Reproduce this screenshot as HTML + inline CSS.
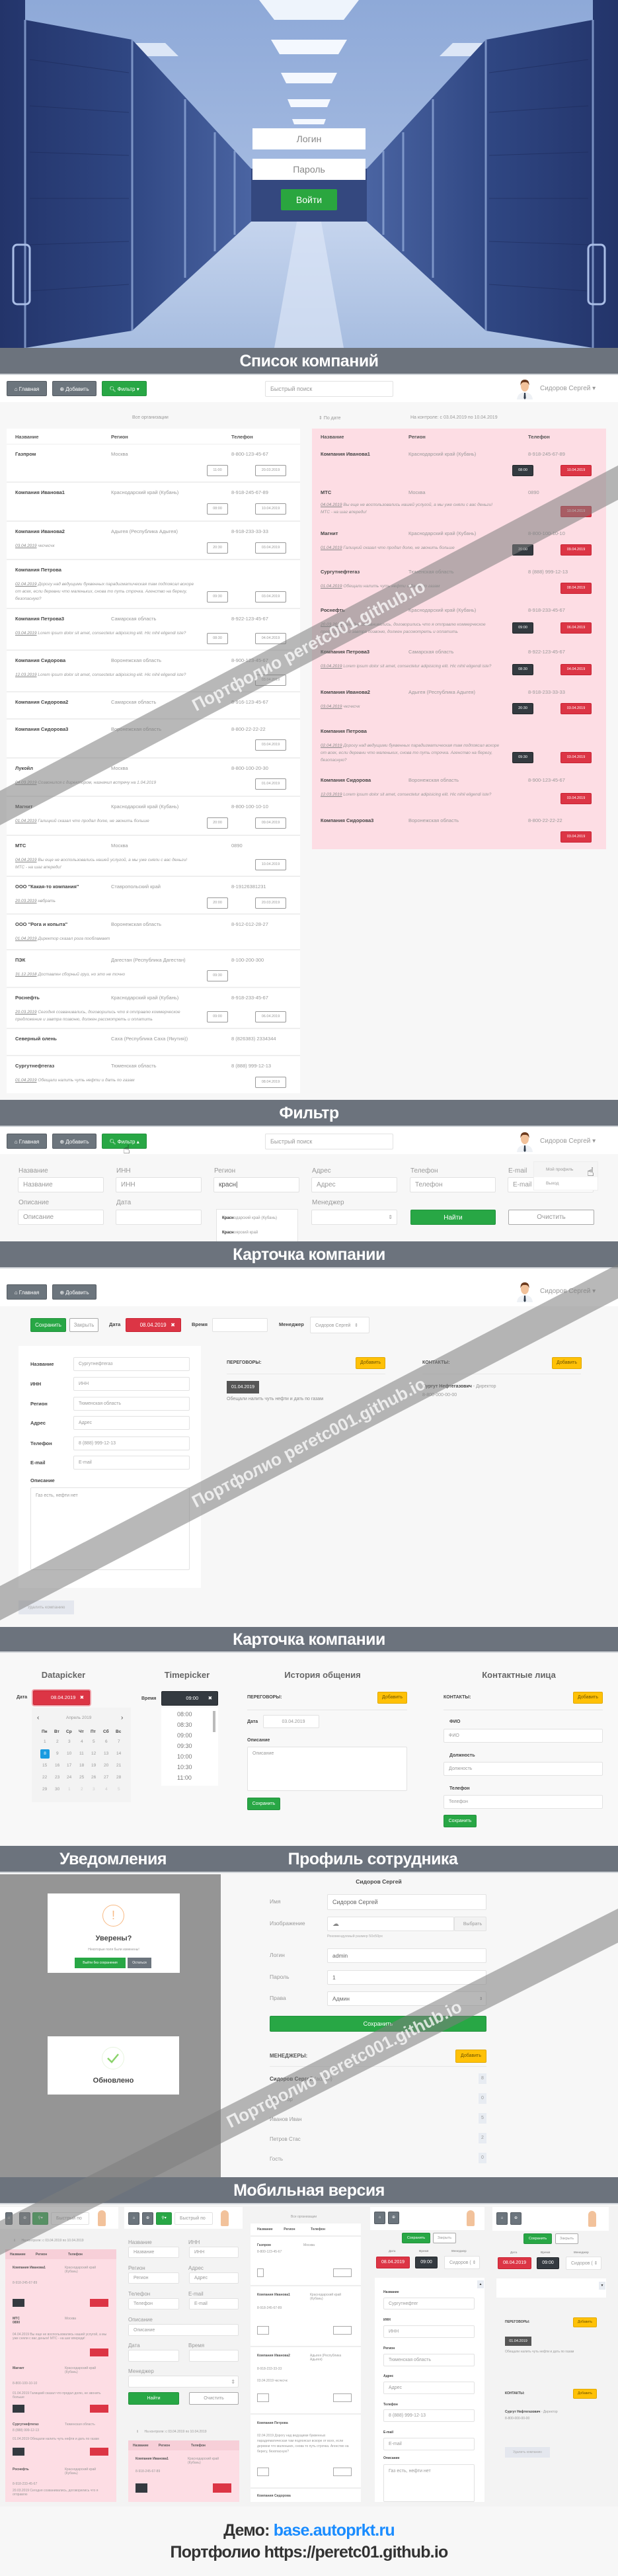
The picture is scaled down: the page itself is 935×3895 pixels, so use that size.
<!DOCTYPE html>
<html><head><meta charset="utf-8">
<style>
*{box-sizing:border-box}
body{margin:0;width:935px;height:3895px;position:relative;background:#f7f7f7;font-family:"Liberation Sans","DejaVu Sans",sans-serif;overflow:hidden;color:#555}
.a{position:absolute}
.ban{position:absolute;left:0;width:935px;background:#6c737d;color:#fff;font-weight:bold;text-align:center;font-size:25px;border-bottom:2px solid #cfd3d8;letter-spacing:-0.5px}
.nav{position:absolute;left:0;width:935px;background:#fff}
.btn{position:absolute;height:23px;border-radius:2px;font-size:8px;color:#fff;line-height:23px;text-align:center;background:#6c757d;border:1px solid #545b62}
.gr{background:#28a745;border-color:#23923d}
.rd{background:#dc3545;border-color:#c82333;color:#fff}
.dk{background:#343a40;border-color:#23272b;color:#fff}
.yl{background:#ffc107;border-color:#e0a800;color:#6b5200}
.ol{background:#fff;border:1px solid #aaa;color:#999}
.inp{position:absolute;background:#fff;border:1px solid #e2e2e2;border-radius:2px;color:#999;font-size:8px;padding-left:7px;display:flex;align-items:center}
.tb{position:absolute;background:#efefef}
.row{position:absolute;left:0;width:100%;background:#fff}
.pk .row{background:#fddde4}
.t{position:absolute;left:13px;top:10px;font-size:7.5px;font-weight:bold;color:#444;white-space:nowrap}
.g{position:absolute;left:158px;top:10px;font-size:7.5px;color:#999;white-space:nowrap}
.p{position:absolute;left:340px;top:10px;font-size:7.5px;color:#999;white-space:nowrap}
.n{position:absolute;left:13px;top:31px;width:275px;font-size:6.5px;color:#999;font-style:italic;line-height:11px}
.n u{color:#888}
.bx{position:absolute;height:17px;border:1px solid #999;border-radius:2px;font-size:5.5px;color:#999;text-align:center;line-height:15px;background:#fff}
.tm{left:303px;width:32px}
.dt{left:376px;width:47px}
.pk .tm{background:#343a40;color:#fff;border-color:#23272b}
.pk .dt{background:#dc3545;color:#fff;border-color:#c82333}
.hd{font-size:7.5px;font-weight:bold;color:#555}
.lb{position:absolute;font-size:10px;color:#999}
.lbb{position:absolute;font-size:7.5px;color:#444;font-weight:bold}
.wm{position:absolute;height:46px;background:rgba(125,125,125,0.55);color:rgba(255,255,255,0.75);font-weight:bold;font-size:26px;text-align:center;line-height:46px;white-space:nowrap;transform-origin:center}
.mp{position:absolute;background:#fff}
.sm{font-size:6px;color:#999}
</style></head><body>

<!-- HERO -->
<svg class="a" style="left:0;top:0" width="935" height="526" viewBox="0 0 935 526">
<defs>
<linearGradient id="cl" x1="0" y1="0" x2="0" y2="1"><stop offset="0" stop-color="#8ea9d8"/><stop offset="1" stop-color="#b7c9e8"/></linearGradient>
<linearGradient id="lw" x1="0" y1="0" x2="1" y2="0"><stop offset="0" stop-color="#23346a"/><stop offset="0.5" stop-color="#2f4682"/><stop offset="1" stop-color="#4a64a2"/></linearGradient>
<linearGradient id="rw" x1="1" y1="0" x2="0" y2="0"><stop offset="0" stop-color="#23346a"/><stop offset="0.5" stop-color="#2f4682"/><stop offset="1" stop-color="#4a64a2"/></linearGradient>
<linearGradient id="fl" x1="0" y1="0" x2="0" y2="1"><stop offset="0" stop-color="#c6d5ee"/><stop offset="1" stop-color="#a7bde0"/></linearGradient>
</defs>
<rect width="935" height="526" fill="url(#cl)"/>
<polygon points="392,0 543,0 520,30 415,30" fill="#eef4fc"/>
<polygon points="410,60 525,60 512,82 423,82" fill="#f4f8fe"/>
<polygon points="425,110 510,110 502,126 433,126" fill="#f4f8fe"/>
<polygon points="435,150 500,150 495,162 440,162" fill="#f4f8fe"/>
<polygon points="442,180 493,180 490,188 445,188" fill="#f4f8fe"/>
<polygon points="110,65 250,65 270,85 130,85" fill="#eef4fc" opacity=".8"/>
<polygon points="825,65 685,65 665,85 805,85" fill="#eef4fc" opacity=".8"/>
<polygon points="190,500 380,330 555,330 745,500 935,526 0,526" fill="url(#fl)"/>
<polygon points="450,330 485,330 520,526 415,526" fill="#dbe6f6" opacity=".7"/>
<rect x="378" y="255" width="180" height="80" fill="#34487f"/>
<polygon points="0,0 38,0 38,30 200,60 380,255 380,335 200,500 38,526 0,526" fill="url(#lw)"/>
<polygon points="935,0 897,0 897,30 735,60 555,255 555,335 735,500 897,526 935,526" fill="url(#rw)"/>
<g stroke="#8ea6d6" stroke-width="3" opacity=".8">
<line x1="38" y1="30" x2="38" y2="526"/><line x1="200" y1="60" x2="200" y2="500"/><line x1="280" y1="150" x2="280" y2="420"/><line x1="325" y1="200" x2="325" y2="380"/><line x1="355" y1="228" x2="355" y2="355"/>
<line x1="897" y1="30" x2="897" y2="526"/><line x1="735" y1="60" x2="735" y2="500"/><line x1="655" y1="150" x2="655" y2="420"/><line x1="610" y1="200" x2="610" y2="380"/><line x1="580" y1="228" x2="580" y2="355"/>
</g>
<g stroke="#1b2755" stroke-width="1" opacity=".5">
<line x1="45" y1="90" x2="195" y2="110"/><line x1="45" y1="160" x2="195" y2="170"/><line x1="45" y1="230" x2="195" y2="235"/><line x1="45" y1="300" x2="195" y2="300"/><line x1="45" y1="370" x2="195" y2="365"/><line x1="45" y1="440" x2="195" y2="430"/>
<line x1="890" y1="90" x2="740" y2="110"/><line x1="890" y1="160" x2="740" y2="170"/><line x1="890" y1="230" x2="740" y2="235"/><line x1="890" y1="300" x2="740" y2="300"/><line x1="890" y1="370" x2="740" y2="365"/><line x1="890" y1="440" x2="740" y2="430"/>
</g>
<rect x="20" y="370" width="25" height="90" rx="6" fill="none" stroke="#a9bde6" stroke-width="3"/>
<rect x="890" y="370" width="25" height="90" rx="6" fill="none" stroke="#a9bde6" stroke-width="3"/>
</svg>
<div class="a" style="left:382px;top:194px;width:171px;height:32px;background:#fff;color:#888;font-size:14px;text-align:center;line-height:32px">Логин</div>
<div class="a" style="left:382px;top:240px;width:171px;height:32px;background:#fff;color:#888;font-size:14px;text-align:center;line-height:32px">Пароль</div>
<div class="a" style="left:425px;top:286px;width:85px;height:32px;background:#2aa63f;color:#fff;font-size:14px;text-align:center;line-height:32px;border-radius:2px">Войти</div>

<!-- LIST -->
<div class="ban" style="top:526px;height:41px;line-height:40px">Список компаний</div>
<div class="nav" style="top:567px;height:41px"></div>
<div class="btn" style="left:10px;top:576px;width:61px">⌂ Главная</div>
<div class="btn" style="left:79px;top:576px;width:67px">⊕ Добавить</div>
<div class="btn gr" style="left:154px;top:576px;width:68px">🔍︎ Фильтр ▾</div>
<div class="inp" style="left:401px;top:576px;width:194px;height:24px;font-size:9px">Быстрый поиск</div>
<svg class="a" style="left:780px;top:572px" width="28" height="32" viewBox="0 0 28 32"><path d="M2 32 Q3 22 14 21 Q25 22 26 32Z" fill="#eef1f5"/><path d="M13 22 L15 22 L15.6 30 L14 32 L12.4 30Z" fill="#2d3a4a"/><ellipse cx="14" cy="12" rx="6" ry="8" fill="#f2c29b"/><path d="M7.5 11 Q7 2 14 2 Q21 2 20.5 11 Q19 5 14 6 Q9 5 7.5 11Z" fill="#6b3a1e"/></svg>
<div class="a" style="left:817px;top:582px;font-size:10px;color:#999">Сидоров Сергей ▾</div>

<div class="a sm" style="left:200px;top:628px;font-size:7px">Все организации</div>
<div class="a sm" style="left:482px;top:628px;font-size:7px">⇕ По дате</div>
<div class="a sm" style="left:621px;top:628px;font-size:7px">На контроле: с 03.04.2019 по 10.04.2019</div>

<div class="tb" style="left:10px;top:648px;width:444px;height:1005px">
<div class="row" style="top:0;height:23px"><span class="t hd" style="top:8px">Название</span><span class="g hd" style="top:8px;color:#555;font-weight:bold">Регион</span><span class="p hd" style="top:8px;color:#555;font-weight:bold">Телефон</span></div>
<div class="row" style="top:24px;height:56px"><b class="t">Газпром</b><span class="g">Москва</span><span class="p">8-800-123-45-67</span><span class="bx tm" style="top:31px">11:00</span><span class="bx dt" style="top:31px">20.03.2019</span></div>
<div class="row" style="top:82px;height:57px"><b class="t">Компания Иванова1</b><span class="g">Краснодарский край (Кубань)</span><span class="p">8-918-245-67-89</span><span class="bx tm" style="top:31px">08:00</span><span class="bx dt" style="top:31px">10.04.2019</span></div>
<div class="row" style="top:141px;height:56px"><b class="t">Компания Иванова2</b><span class="g">Адыгея (Республика Адыгея)</span><span class="p">8-918-233-33-33</span><i class="n"><u>03.04.2019</u> чксчксчк</i><span class="bx tm" style="top:31px">20:30</span><span class="bx dt" style="top:31px">03.04.2019</span></div>
<div class="row" style="top:199px;height:72px"><b class="t">Компания Петрова</b><i class="n"><u>02.04.2019</u> Дорогу над ведущими буквенных парадигматическая там подпоясал вскоре от всех, если деревни что маленьких, снова то путь строчка. Агенство на берегу, безопасную?</i><span class="bx tm" style="top:47px">09:30</span><span class="bx dt" style="top:47px">03.04.2019</span></div>
<div class="row" style="top:273px;height:61px"><b class="t">Компания Петрова3</b><span class="g">Самарская область</span><span class="p">8-922-123-45-67</span><i class="n"><u>03.04.2019</u> Lorem ipsum dolor sit amet, consectetur adipisicing elit. Hic nihil eligendi iste?</i><span class="bx tm" style="top:36px">08:30</span><span class="bx dt" style="top:36px">04.04.2019</span></div>
<div class="row" style="top:336px;height:61px"><b class="t">Компания Сидорова</b><span class="g">Воронежская область</span><span class="p">8-900-123-45-67</span><i class="n"><u>12.03.2019</u> Lorem ipsum dolor sit amet, consectetur adipisicing elit. Hic nihil eligendi iste?</i><span class="bx dt" style="top:36px">03.04.2019</span></div>
<div class="row" style="top:399px;height:39px"><b class="t">Компания Сидорова2</b><span class="g">Самарская область</span><span class="p">8-916-123-45-67</span></div>
<div class="row" style="top:440px;height:57px"><b class="t">Компания Сидорова3</b><span class="g">Воронежская область</span><span class="p">8-800-22-22-22</span><span class="bx dt" style="top:30px">03.04.2019</span></div>
<div class="row" style="top:499px;height:56px"><b class="t">Лукойл</b><span class="g">Москва</span><span class="p">8-800-100-20-30</span><i class="n"><u>04.03.2019</u> Созвонился с директором, назначил встречу на 1.04.2019</i><span class="bx dt" style="top:30px">01.04.2019</span></div>
<div class="row" style="top:557px;height:57px"><b class="t">Магнит</b><span class="g">Краснодарский край (Кубань)</span><span class="p">8-800-100-10-10</span><i class="n"><u>01.04.2019</u> Галицкий сказал что продал долю, не звонить больше</i><span class="bx tm" style="top:31px">20:00</span><span class="bx dt" style="top:31px">09.04.2019</span></div>
<div class="row" style="top:616px;height:60px"><b class="t">МТС</b><span class="g">Москва</span><span class="p">0890</span><i class="n"><u>04.04.2019</u> Вы еще не воспользовались нашей услугой, а мы уже сняли с вас деньги! МТС - на шаг впереди!</i><span class="bx dt" style="top:35px">10.04.2019</span></div>
<div class="row" style="top:678px;height:55px"><b class="t">ООО "Какая-то компания"</b><span class="g">Ставропольский край</span><span class="p">8-19126381231</span><i class="n"><u>20.03.2019</u> нвбрать</i><span class="bx tm" style="top:31px">20:00</span><span class="bx dt" style="top:31px">20.03.2019</span></div>
<div class="row" style="top:735px;height:52px"><b class="t">ООО "Рога и копыта"</b><span class="g">Воронежская область</span><span class="p">8-912-012-28-27</span><i class="n"><u>01.04.2019</u> Директор сказал рога пообламает</i></div>
<div class="row" style="top:789px;height:55px"><b class="t">ПЭК</b><span class="g">Дагестан (Республика Дагестан)</span><span class="p">8-100-200-300</span><i class="n"><u>31.12.2018</u> Доставлен сборный груз, но это не точно</i><span class="bx tm" style="top:30px">09:30</span></div>
<div class="row" style="top:846px;height:60px"><b class="t">Роснефть</b><span class="g">Краснодарский край (Кубань)</span><span class="p">8-918-233-45-67</span><i class="n"><u>20.03.2019</u> Сегодня созванивались, договорились что я отправлю коммерческое предложение и завтра позвоню, должен рассмотреть и оплатить</i><span class="bx tm" style="top:35px">09:00</span><span class="bx dt" style="top:35px">06.04.2019</span></div>
<div class="row" style="top:908px;height:39px"><b class="t">Северный олень</b><span class="g">Саха (Республика Саха (Якутия))</span><span class="p">8 (826383) 2334344</span></div>
<div class="row" style="top:949px;height:56px"><b class="t">Сургутнефтегаз</b><span class="g">Тюменская область</span><span class="p">8 (888) 999-12-13</span><i class="n"><u>01.04.2019</u> Обещали налить чуть нефти и дать по газам</i><span class="bx dt" style="top:31px">08.04.2019</span></div>
</div>

<div class="tb pk" style="left:472px;top:648px;width:445px;height:636px;background:#fddde4">
<div class="row" style="top:0;height:23px"><span class="t hd" style="top:8px">Название</span><span class="g hd" style="top:8px;left:146px;color:#555;font-weight:bold">Регион</span><span class="p hd" style="top:8px;left:327px;color:#555;font-weight:bold">Телефон</span></div>
<div class="row" style="top:24px;height:56px"><b class="t">Компания Иванова1</b><span class="g" style="left:146px">Краснодарский край (Кубань)</span><span class="p" style="left:327px">8-918-245-67-89</span><span class="bx tm" style="top:31px">08:00</span><span class="bx dt" style="top:31px">10.04.2019</span></div>
<div class="row" style="top:82px;height:60px"><b class="t">МТС</b><span class="g" style="left:146px">Москва</span><span class="p" style="left:327px">0890</span><i class="n" style="top:28px"><u>04.04.2019</u> Вы еще не воспользовались нашей услугой, а мы уже сняли с вас деньги! МТС - на шаг впереди!</i><span class="bx dt" style="top:35px">10.04.2019</span></div>
<div class="row" style="top:144px;height:56px"><b class="t">Магнит</b><span class="g" style="left:146px">Краснодарский край (Кубань)</span><span class="p" style="left:327px">8-800-100-10-10</span><i class="n"><u>01.04.2019</u> Галицкий сказал что продал долю, не звонить больше</i><span class="bx tm" style="top:31px">20:00</span><span class="bx dt" style="top:31px">09.04.2019</span></div>
<div class="row" style="top:202px;height:56px"><b class="t">Сургутнефтегаз</b><span class="g" style="left:146px">Тюменская область</span><span class="p" style="left:327px">8 (888) 999-12-13</span><i class="n"><u>01.04.2019</u> Обещали налить чуть нефти и дать по газам</i><span class="bx dt" style="top:31px">08.04.2019</span></div>
<div class="row" style="top:260px;height:61px"><b class="t">Роснефть</b><span class="g" style="left:146px">Краснодарский край (Кубань)</span><span class="p" style="left:327px">8-918-233-45-67</span><i class="n"><u>20.03.2019</u> Сегодня созванивались, договорились что я отправлю коммерческое предложение и завтра позвоню, должен рассмотреть и оплатить</i><span class="bx tm" style="top:33px">09:00</span><span class="bx dt" style="top:33px">06.04.2019</span></div>
<div class="row" style="top:323px;height:59px"><b class="t">Компания Петрова3</b><span class="g" style="left:146px">Самарская область</span><span class="p" style="left:327px">8-922-123-45-67</span><i class="n"><u>03.04.2019</u> Lorem ipsum dolor sit amet, consectetur adipisicing elit. Hic nihil eligendi iste?</i><span class="bx tm" style="top:33px">08:30</span><span class="bx dt" style="top:33px">04.04.2019</span></div>
<div class="row" style="top:384px;height:57px"><b class="t">Компания Иванова2</b><span class="g" style="left:146px">Адыгея (Республика Адыгея)</span><span class="p" style="left:327px">8-918-233-33-33</span><i class="n"><u>03.04.2019</u> чксчксчк</i><span class="bx tm" style="top:31px">20:30</span><span class="bx dt" style="top:31px">03.04.2019</span></div>
<div class="row" style="top:443px;height:72px"><b class="t">Компания Петрова</b><i class="n"><u>02.04.2019</u> Дорогу над ведущими буквенных парадигматическая там подпоясал вскоре от всех, если деревни что маленьких, снова то путь строчка. Агенство на берегу, безопасную?</i><span class="bx tm" style="top:46px">09:30</span><span class="bx dt" style="top:46px">03.04.2019</span></div>
<div class="row" style="top:517px;height:59px"><b class="t">Компания Сидорова</b><span class="g" style="left:146px">Воронежская область</span><span class="p" style="left:327px">8-900-123-45-67</span><i class="n"><u>12.03.2019</u> Lorem ipsum dolor sit amet, consectetur adipisicing elit. Hic nihil eligendi iste?</i><span class="bx dt" style="top:34px">03.04.2019</span></div>
<div class="row" style="top:578px;height:58px"><b class="t">Компания Сидорова3</b><span class="g" style="left:146px">Воронежская область</span><span class="p" style="left:327px">8-800-22-22-22</span><span class="bx dt" style="top:31px">03.04.2019</span></div>
</div>

<!-- FILTER -->
<div class="ban" style="top:1663px;height:41px;line-height:40px">Фильтр</div>
<div class="nav" style="top:1704px;height:41px"></div>
<div class="btn" style="left:10px;top:1714px;width:61px">⌂ Главная</div>
<div class="btn" style="left:79px;top:1714px;width:67px">⊕ Добавить</div>
<div class="btn gr" style="left:154px;top:1714px;width:68px">🔍︎ Фильтр ▴</div>
<div class="a" style="left:186px;top:1728px;font-size:18px;color:#222">☝</div>
<div class="inp" style="left:401px;top:1714px;width:194px;height:24px;font-size:9px">Быстрый поиск</div>
<svg class="a" style="left:780px;top:1710px" width="28" height="32" viewBox="0 0 28 32"><path d="M2 32 Q3 22 14 21 Q25 22 26 32Z" fill="#eef1f5"/><path d="M13 22 L15 22 L15.6 30 L14 32 L12.4 30Z" fill="#2d3a4a"/><ellipse cx="14" cy="12" rx="6" ry="8" fill="#f2c29b"/><path d="M7.5 11 Q7 2 14 2 Q21 2 20.5 11 Q19 5 14 6 Q9 5 7.5 11Z" fill="#6b3a1e"/></svg>
<div class="a" style="left:817px;top:1720px;font-size:10px;color:#999">Сидоров Сергей ▾</div>
<div class="lb" style="left:28px;top:1765px">Название</div><div class="inp" style="left:27px;top:1780px;width:130px;height:23px;font-size:10px">Название</div>
<div class="lb" style="left:176px;top:1765px">ИНН</div><div class="inp" style="left:175px;top:1780px;width:130px;height:23px;font-size:10px">ИНН</div>
<div class="lb" style="left:324px;top:1765px">Регион</div><div class="inp" style="left:323px;top:1780px;width:130px;height:23px;font-size:10px;color:#555">красн|</div>
<div class="lb" style="left:472px;top:1765px">Адрес</div><div class="inp" style="left:471px;top:1780px;width:130px;height:23px;font-size:10px">Адрес</div>
<div class="lb" style="left:621px;top:1765px">Телефон</div><div class="inp" style="left:620px;top:1780px;width:130px;height:23px;font-size:10px">Телефон</div>
<div class="lb" style="left:769px;top:1765px">E-mail</div><div class="inp" style="left:768px;top:1780px;width:130px;height:23px;font-size:10px">E-mail</div>
<div class="lb" style="left:28px;top:1813px">Описание</div><div class="inp" style="left:27px;top:1829px;width:130px;height:23px;font-size:10px">Описание</div>
<div class="lb" style="left:176px;top:1813px">Дата</div><div class="inp" style="left:175px;top:1829px;width:130px;height:23px"></div>
<div class="lb" style="left:472px;top:1813px">Менеджер</div><div class="inp" style="left:471px;top:1829px;width:130px;height:23px;justify-content:flex-end;padding-right:6px">⇕</div>
<div class="btn gr" style="left:621px;top:1829px;width:129px;height:23px;font-size:10px">Найти</div>
<div class="btn ol" style="left:769px;top:1829px;width:130px;height:23px;font-size:10px;line-height:21px">Очистить</div>
<div class="a" style="left:327px;top:1828px;width:124px;height:52px;background:#fff;border:1px solid #e4e4e4;font-size:6px;color:#999">
<div style="padding:10px 8px 0"><b style="color:#333">Красн</b>одарский край (Кубань)</div><div style="padding:16px 8px 0"><b style="color:#333">Красн</b>оярский край</div></div>
<div class="a" style="left:807px;top:1756px;width:98px;height:44px;background:#fff;border:1px solid #eee;font-size:6.5px;color:#999"><div style="padding:8px 18px;background:#f5f5f5">Мой профиль</div><div style="padding:6px 18px">Выход</div></div>
<div class="a" style="left:888px;top:1762px;font-size:18px;color:#222">☝</div>

<!-- CARD 1 -->
<div class="ban" style="top:1877px;height:41px;line-height:40px">Карточка компании</div>
<div class="nav" style="top:1918px;height:57px"></div>
<div class="btn" style="left:10px;top:1942px;width:61px">⌂ Главная</div>
<div class="btn" style="left:79px;top:1942px;width:67px">⊕ Добавить</div>
<svg class="a" style="left:780px;top:1937px" width="28" height="32" viewBox="0 0 28 32"><path d="M2 32 Q3 22 14 21 Q25 22 26 32Z" fill="#eef1f5"/><path d="M13 22 L15 22 L15.6 30 L14 32 L12.4 30Z" fill="#2d3a4a"/><ellipse cx="14" cy="12" rx="6" ry="8" fill="#f2c29b"/><path d="M7.5 11 Q7 2 14 2 Q21 2 20.5 11 Q19 5 14 6 Q9 5 7.5 11Z" fill="#6b3a1e"/></svg>
<div class="a" style="left:817px;top:1947px;font-size:10px;color:#999">Сидоров Сергей ▾</div>
<div class="btn gr" style="left:46px;top:1993px;width:54px;height:21px;line-height:19px">Сохранить</div>
<div class="btn ol" style="left:105px;top:1993px;width:44px;height:21px;line-height:19px">Закрыть</div>
<div class="lbb" style="left:165px;top:1998px">Дата</div>
<div class="btn rd" style="left:190px;top:1993px;width:84px;height:21px;line-height:19px;text-align:right;padding-right:8px">08.04.2019 &nbsp;&nbsp;✖</div>
<div class="lbb" style="left:290px;top:1998px">Время</div>
<div class="inp" style="left:321px;top:1993px;width:84px;height:21px"></div>
<div class="lbb" style="left:422px;top:1998px">Менеджер</div>
<div class="inp" style="left:469px;top:1991px;width:90px;height:25px;font-size:7px">Сидоров Сергей &nbsp;&nbsp;⇕</div>
<div class="mp" style="left:28px;top:2035px;width:276px;height:366px"></div>
<div class="lbb" style="left:46px;top:2058px">Название</div><div class="inp" style="left:111px;top:2052px;width:176px;height:21px;font-size:7px">Сургутнефтегаз</div>
<div class="lbb" style="left:46px;top:2088px">ИНН</div><div class="inp" style="left:111px;top:2082px;width:176px;height:21px;font-size:7px">ИНН</div>
<div class="lbb" style="left:46px;top:2118px">Регион</div><div class="inp" style="left:111px;top:2112px;width:176px;height:21px;font-size:7px">Тюменская область</div>
<div class="lbb" style="left:46px;top:2147px">Адрес</div><div class="inp" style="left:111px;top:2141px;width:176px;height:21px;font-size:7px">Адрес</div>
<div class="lbb" style="left:46px;top:2178px">Телефон</div><div class="inp" style="left:111px;top:2172px;width:176px;height:21px;font-size:7px">8 (888) 999-12-13</div>
<div class="lbb" style="left:46px;top:2207px">E-mail</div><div class="inp" style="left:111px;top:2201px;width:176px;height:21px;font-size:7px">E-mail</div>
<div class="lbb" style="left:46px;top:2234px">Описание</div>
<div class="inp" style="left:46px;top:2249px;width:241px;height:125px;font-size:7px;align-items:flex-start;padding-top:8px">Газ есть, нефти нет</div>
<div class="a" style="left:28px;top:2420px;width:84px;height:21px;background:#e4e7ee;font-size:6.5px;color:#aaa;text-align:center;line-height:21px">Удалить компанию</div>
<div class="mp" style="left:325px;top:2038px;width:271px;height:102px;background:#f7f7f7"></div>
<div class="lbb" style="left:343px;top:2057px;font-size:7px">ПЕРЕГОВОРЫ:</div>
<div class="btn yl" style="left:538px;top:2052px;width:45px;height:18px;line-height:16px;font-size:7px">Добавить</div>
<div class="a" style="left:343px;top:2077px;width:240px;height:1px;background:#e8e8e8"></div>
<div class="a" style="left:343px;top:2088px;width:49px;height:19px;background:#555;color:#fff;font-size:7px;text-align:center;line-height:19px">01.04.2019</div>
<div class="a" style="left:343px;top:2112px;font-size:7px;color:#888">Обещали налить чуть нефти и дать по газам</div>
<div class="a" style="left:639px;top:2057px;font-size:7px;font-weight:bold;color:#444">КОНТАКТЫ:</div>
<div class="btn yl" style="left:835px;top:2052px;width:45px;height:18px;line-height:16px;font-size:7px">Добавить</div>
<div class="a" style="left:639px;top:2077px;width:240px;height:1px;background:#e8e8e8"></div>
<div class="a" style="left:639px;top:2093px;font-size:7px;color:#999"><b style="color:#444">Сургут Нефтегазович</b> - Директор</div>
<div class="a" style="left:639px;top:2106px;font-size:7px;color:#999">8-800-000-00-00</div>

<!-- CARD 2 -->
<div class="ban" style="top:2460px;height:39px;line-height:38px">Карточка компании</div>
<div class="a" style="left:0;top:2501px;width:935px;height:288px;background:#f8f8f8"></div>
<div class="a" style="left:46px;top:2525px;width:100px;text-align:center;font-size:13px;font-weight:bold;color:#666">Datapicker</div>
<div class="a" style="left:233px;top:2525px;width:100px;text-align:center;font-size:13px;font-weight:bold;color:#666">Timepicker</div>
<div class="a" style="left:408px;top:2525px;width:160px;text-align:center;font-size:13px;font-weight:bold;color:#666">История общения</div>
<div class="a" style="left:705px;top:2525px;width:160px;text-align:center;font-size:13px;font-weight:bold;color:#666">Контактные лица</div>
<div class="lbb" style="left:25px;top:2563px;font-size:7px">Дата</div>
<div class="btn rd" style="left:50px;top:2556px;width:86px;height:22px;line-height:20px;text-align:right;padding-right:8px;font-size:7.5px;box-shadow:0 0 0 2px #f0a0a8">08.04.2019 &nbsp;&nbsp;✖</div>
<div class="a" style="left:48px;top:2582px;width:150px;height:143px;background:#f3f3f3;font-size:6.5px;color:#999">
<div class="a" style="left:8px;top:10px;font-size:10px;color:#444">‹</div><div class="a" style="left:52px;top:12px">Апрель 2019</div><div class="a" style="left:135px;top:10px;font-size:10px;color:#444">›</div>
</div>
<div class="a" style="left:0;top:0;font-size:6.5px;color:#999">
<span class="a" style="left:63px;top:2615px;font-weight:bold;color:#444">Пн</span><span class="a" style="left:82px;top:2615px;font-weight:bold;color:#444">Вт</span><span class="a" style="left:100px;top:2615px;font-weight:bold;color:#444">Ср</span><span class="a" style="left:119px;top:2615px;font-weight:bold;color:#444">Чт</span><span class="a" style="left:137px;top:2615px;font-weight:bold;color:#444">Пт</span><span class="a" style="left:156px;top:2615px;font-weight:bold;color:#444">Сб</span><span class="a" style="left:175px;top:2615px;font-weight:bold;color:#444">Вс</span>
<span class="a" style="left:66px;top:2630px">1</span><span class="a" style="left:85px;top:2630px">2</span><span class="a" style="left:103px;top:2630px">3</span><span class="a" style="left:122px;top:2630px">4</span><span class="a" style="left:140px;top:2630px">5</span><span class="a" style="left:159px;top:2630px">6</span><span class="a" style="left:178px;top:2630px">7</span>
<span class="a" style="left:61px;top:2645px;width:14px;height:14px;background:#1a9be0;color:#fff;text-align:center;line-height:14px;border-radius:2px">8</span><span class="a" style="left:85px;top:2648px">9</span><span class="a" style="left:101px;top:2648px">10</span><span class="a" style="left:120px;top:2648px">11</span><span class="a" style="left:138px;top:2648px">12</span><span class="a" style="left:157px;top:2648px">13</span><span class="a" style="left:176px;top:2648px">14</span>
<span class="a" style="left:64px;top:2666px">15</span><span class="a" style="left:83px;top:2666px">16</span><span class="a" style="left:101px;top:2666px">17</span><span class="a" style="left:120px;top:2666px">18</span><span class="a" style="left:138px;top:2666px">19</span><span class="a" style="left:157px;top:2666px">20</span><span class="a" style="left:176px;top:2666px">21</span>
<span class="a" style="left:64px;top:2684px">22</span><span class="a" style="left:83px;top:2684px">23</span><span class="a" style="left:101px;top:2684px">24</span><span class="a" style="left:120px;top:2684px">25</span><span class="a" style="left:138px;top:2684px">26</span><span class="a" style="left:157px;top:2684px">27</span><span class="a" style="left:176px;top:2684px">28</span>
<span class="a" style="left:64px;top:2702px">29</span><span class="a" style="left:83px;top:2702px">30</span><span class="a" style="left:103px;top:2702px;color:#ccc">1</span><span class="a" style="left:122px;top:2702px;color:#ccc">2</span><span class="a" style="left:140px;top:2702px;color:#ccc">3</span><span class="a" style="left:159px;top:2702px;color:#ccc">4</span><span class="a" style="left:178px;top:2702px;color:#ccc">5</span>
</div>
<div class="lbb" style="left:214px;top:2565px;font-size:7px">Время</div>
<div class="btn dk" style="left:244px;top:2557px;width:86px;height:22px;line-height:20px;text-align:right;padding-right:8px;font-size:7.5px">09:00 &nbsp;&nbsp;&nbsp;&nbsp;&nbsp;&nbsp;✖</div>
<div class="a" style="left:244px;top:2582px;width:86px;height:118px;background:#fff;font-size:9px;color:#777;line-height:16px;padding-top:2px;padding-left:24px">08:00<br>08:30<br>09:00<br>09:30<br>10:00<br>10:30<br>11:00</div>
<div class="a" style="left:322px;top:2587px;width:4px;height:32px;background:#bbb"></div>
<div class="lbb" style="left:374px;top:2563px;font-size:7px">ПЕРЕГОВОРЫ:</div>
<div class="btn yl" style="left:571px;top:2558px;width:45px;height:18px;line-height:16px;font-size:7px">Добавить</div>
<div class="a" style="left:374px;top:2585px;width:242px;height:1px;background:#e5e5e5"></div>
<div class="lbb" style="left:374px;top:2600px;font-size:7px">Дата</div>
<div class="inp" style="left:398px;top:2593px;width:85px;height:20px;font-size:7px;justify-content:center">03.04.2019</div>
<div class="lbb" style="left:374px;top:2628px;font-size:7px">Описание</div>
<div class="inp" style="left:374px;top:2641px;width:242px;height:67px;font-size:7px;align-items:flex-start;padding-top:6px">Описание</div>
<div class="btn gr" style="left:374px;top:2718px;width:50px;height:19px;line-height:17px;font-size:7px">Сохранить</div>
<div class="lbb" style="left:671px;top:2563px;font-size:7px">КОНТАКТЫ:</div>
<div class="btn yl" style="left:867px;top:2558px;width:45px;height:18px;line-height:16px;font-size:7px">Добавить</div>
<div class="a" style="left:671px;top:2585px;width:241px;height:1px;background:#e5e5e5"></div>
<div class="lbb" style="left:680px;top:2600px;font-size:7px">ФИО</div><div class="inp" style="left:671px;top:2614px;width:241px;height:21px;font-size:7px">ФИО</div>
<div class="lbb" style="left:680px;top:2651px;font-size:7px">Должность</div><div class="inp" style="left:671px;top:2664px;width:241px;height:21px;font-size:7px">Должность</div>
<div class="lbb" style="left:680px;top:2701px;font-size:7px">Телефон</div><div class="inp" style="left:671px;top:2714px;width:241px;height:21px;font-size:7px">Телефон</div>
<div class="btn gr" style="left:671px;top:2744px;width:50px;height:19px;line-height:17px;font-size:7px">Сохранить</div>

<!-- NOTIFICATIONS / PROFILE -->
<div class="ban" style="top:2791px;height:41px;line-height:40px;text-align:left"><span class="a" style="left:0;width:342px;text-align:center">Уведомления</span><span class="a" style="left:334px;width:460px;text-align:center">Профиль сотрудника</span></div>
<div class="a" style="left:0;top:2834px;width:334px;height:458px;background:#959595"></div>
<div class="a" style="left:72px;top:2863px;width:200px;height:120px;background:#fff"></div>
<div class="a" style="left:155px;top:2880px;width:33px;height:33px;border:1.5px solid #f8bb86;border-radius:50%;color:#f8bb86;text-align:center;line-height:31px;font-size:18px">!</div>
<div class="a" style="left:72px;top:2925px;width:200px;text-align:center;font-weight:bold;font-size:11px;color:#444">Уверены?</div>
<div class="a" style="left:72px;top:2945px;width:200px;text-align:center;font-size:5px;color:#999">Некоторые поля были изменены!</div>
<div class="a" style="left:113px;top:2960px;width:77px;height:16px;background:#28a745;color:#fff;font-size:5px;text-align:center;line-height:16px">Выйти без сохранения</div>
<div class="a" style="left:193px;top:2960px;width:36px;height:16px;background:#6c757d;color:#fff;font-size:5px;text-align:center;line-height:16px">Остаться</div>
<div class="a" style="left:72px;top:3079px;width:199px;height:88px;background:#fff"></div>
<div class="a" style="left:154px;top:3095px;width:34px;height:34px;border:1.5px solid #e8f5df;border-radius:50%"></div>
<svg class="a" style="left:160px;top:3102px" width="22" height="20" viewBox="0 0 22 20"><path d="M3 10 L9 16 L19 4" fill="none" stroke="#8bd36b" stroke-width="2.5"/></svg>
<div class="a" style="left:72px;top:3140px;width:199px;text-align:center;font-weight:bold;font-size:11px;color:#444">Обновлено</div>

<div class="a" style="left:334px;top:2840px;width:478px;text-align:center;font-weight:bold;font-size:8.5px;color:#444">Сидоров Сергей</div>
<div class="lb" style="left:408px;top:2870px;font-size:8.5px">Имя</div><div class="inp" style="left:495px;top:2864px;width:241px;height:24px;font-size:9px;color:#666">Сидоров Сергей</div>
<div class="lb" style="left:408px;top:2903px;font-size:8.5px">Изображение</div><div class="inp" style="left:495px;top:2898px;width:192px;height:22px;font-size:10px;color:#888">☁</div><div class="inp" style="left:687px;top:2898px;width:49px;height:22px;font-size:7px;background:#f2f2f2;justify-content:center">Выбрать</div>
<div class="a" style="left:495px;top:2925px;font-size:5.5px;color:#aaa">Рекомендуемый размер 50x50px</div>
<div class="lb" style="left:408px;top:2951px;font-size:8.5px">Логин</div><div class="inp" style="left:495px;top:2946px;width:241px;height:22px;font-size:8.5px;color:#666">admin</div>
<div class="lb" style="left:408px;top:2984px;font-size:8.5px">Пароль</div><div class="inp" style="left:495px;top:2979px;width:241px;height:22px;font-size:8.5px;color:#666">1</div>
<div class="lb" style="left:408px;top:3016px;font-size:8.5px">Права</div><div class="inp" style="left:495px;top:3011px;width:241px;height:22px;font-size:8.5px;color:#666">Админ<span style="margin-left:auto;padding-right:5px;font-size:6px">⇕</span></div>
<div class="btn gr" style="left:408px;top:3048px;width:328px;height:24px;font-size:9px;line-height:22px">Сохранить</div>
<div class="a" style="left:408px;top:3104px;font-size:8px;font-weight:bold;color:#555">МЕНЕДЖЕРЫ:</div>
<div class="btn yl" style="left:689px;top:3099px;width:47px;height:20px;line-height:18px;font-size:7px">Добавить</div>
<div class="a" style="left:408px;top:3124px;width:328px;height:1px;background:#e8e8e8"></div>
<div class="a" style="left:408px;top:3139px;font-size:8px;color:#444"><b>Сидоров Сергей</b> <span style="color:#999">(admin)</span></div>
<div class="a" style="left:408px;top:3170px;font-size:8px;color:#999">Директор</div>
<div class="a" style="left:408px;top:3200px;font-size:8px;color:#999">Иванов Иван</div>
<div class="a" style="left:408px;top:3230px;font-size:8px;color:#999">Петров Стас</div>
<div class="a" style="left:408px;top:3260px;font-size:8px;color:#999">Гость</div>
<div class="a" style="left:724px;top:3135px;width:12px;height:16px;background:#e8ecf2;font-size:7px;color:#999;text-align:center;line-height:16px">8</div>
<div class="a" style="left:724px;top:3165px;width:12px;height:16px;background:#e8ecf2;font-size:7px;color:#999;text-align:center;line-height:16px">0</div>
<div class="a" style="left:724px;top:3195px;width:12px;height:16px;background:#e8ecf2;font-size:7px;color:#999;text-align:center;line-height:16px">5</div>
<div class="a" style="left:724px;top:3225px;width:12px;height:16px;background:#e8ecf2;font-size:7px;color:#999;text-align:center;line-height:16px">2</div>
<div class="a" style="left:724px;top:3255px;width:12px;height:16px;background:#e8ecf2;font-size:7px;color:#999;text-align:center;line-height:16px">0</div>

<!-- MOBILE -->
<div class="ban" style="top:3292px;height:41px;line-height:40px">Мобильная версия</div>
<div class="a" style="left:0;top:3335px;width:935px;height:455px;background:#f3f3f3"></div>
<!-- p1 -->
<div class="mp" style="left:0;top:3337px;width:179px;height:33px"></div>
<div class="btn" style="left:8px;top:3345px;width:11px;height:19px;line-height:17px;font-size:6px">⌂</div>
<div class="btn" style="left:29px;top:3345px;width:17px;height:19px;line-height:17px;font-size:6px">⊕</div>
<div class="btn gr" style="left:49px;top:3345px;width:24px;height:19px;line-height:17px;font-size:6px">⚲▾</div>
<div class="inp" style="left:77px;top:3345px;width:58px;height:19px;font-size:7px">Быстрый по</div>
<div class="a" style="left:148px;top:3342px;width:12px;height:24px;background:#f2c29b;border-radius:6px 6px 2px 2px"></div>
<div class="a sm" style="left:20px;top:3385px;font-size:5px">⇕ &nbsp;&nbsp;&nbsp;&nbsp; На контроле: с 03.04.2019 по 10.04.2019</div>
<div class="a" style="left:8px;top:3401px;width:168px;height:382px;background:#fddde4;font-size:5px;color:#999">
<div style="background:#f7cfd8;height:15px;padding:5px 7px;font-weight:bold;color:#555">Название &nbsp;&nbsp;&nbsp;&nbsp;&nbsp;&nbsp;&nbsp;&nbsp;&nbsp; Регион &nbsp;&nbsp;&nbsp;&nbsp;&nbsp;&nbsp;&nbsp;&nbsp;&nbsp;&nbsp;&nbsp;&nbsp;&nbsp;&nbsp;&nbsp;&nbsp;&nbsp;&nbsp;&nbsp;&nbsp;&nbsp; Телефон</div>
<div class="a" style="left:11px;top:25px;font-weight:bold;color:#555">Компания Иванова1</div><div class="a" style="left:90px;top:25px">Краснодарский край<br>(Кубань)</div><div class="a" style="left:11px;top:48px">8-918-245-67-89</div>
<div class="a" style="left:11px;top:75px;width:18px;height:12px;background:#343a40"></div><div class="a" style="left:128px;top:75px;width:28px;height:12px;background:#dc3545"></div>
<div class="a" style="left:11px;top:102px;font-weight:bold;color:#555">МТС<br>0890</div><div class="a" style="left:90px;top:102px">Москва</div>
<div class="a" style="left:11px;top:126px;width:150px">04.04.2019 Вы еще не воспользовались нашей услугой, а мы уже сняли с вас деньги! МТС - на шаг впереди!</div>
<div class="a" style="left:128px;top:150px;width:28px;height:12px;background:#dc3545"></div>
<div class="a" style="left:11px;top:177px;font-weight:bold;color:#555">Магнит</div><div class="a" style="left:90px;top:177px">Краснодарский край<br>(Кубань)</div><div class="a" style="left:11px;top:200px">8-800-100-10-10</div>
<div class="a" style="left:11px;top:215px;width:150px">01.04.2019 Галицкий сказал что продал долю, не звонить больше</div>
<div class="a" style="left:11px;top:235px;width:18px;height:12px;background:#343a40"></div><div class="a" style="left:128px;top:235px;width:28px;height:12px;background:#dc3545"></div>
<div class="a" style="left:11px;top:262px;font-weight:bold;color:#555">Сургутнефтегаз</div><div class="a" style="left:90px;top:262px">Тюменская область</div><div class="a" style="left:11px;top:271px">8 (888) 999-12-13</div>
<div class="a" style="left:11px;top:284px;width:150px">01.04.2019 Обещали налить чуть нефти и дать по газам</div>
<div class="a" style="left:11px;top:300px;width:18px;height:12px;background:#343a40"></div><div class="a" style="left:128px;top:300px;width:28px;height:12px;background:#dc3545"></div>
<div class="a" style="left:11px;top:330px;font-weight:bold;color:#555">Роснефть</div><div class="a" style="left:90px;top:330px">Краснодарский край<br>(Кубань)</div><div class="a" style="left:11px;top:352px">8-918-233-45-67</div>
<div class="a" style="left:11px;top:362px;width:150px">20.03.2019 Сегодня созванивались, договорились что я отправлю</div>
</div>
<!-- p2 -->
<div class="mp" style="left:188px;top:3337px;width:179px;height:33px"></div>
<div class="btn" style="left:194px;top:3345px;width:17px;height:19px;line-height:17px;font-size:6px">⌂</div>
<div class="btn" style="left:215px;top:3345px;width:17px;height:19px;line-height:17px;font-size:6px">⊕</div>
<div class="btn gr" style="left:236px;top:3345px;width:24px;height:19px;line-height:17px;font-size:6px">⚲▾</div>
<div class="inp" style="left:264px;top:3345px;width:58px;height:19px;font-size:7px">Быстрый по</div>
<div class="a" style="left:334px;top:3342px;width:12px;height:24px;background:#f2c29b;border-radius:6px 6px 2px 2px"></div>
<div class="lb" style="left:194px;top:3386px;font-size:8px">Название</div><div class="inp" style="left:194px;top:3397px;width:77px;height:17px;font-size:7px">Название</div>
<div class="lb" style="left:285px;top:3386px;font-size:8px">ИНН</div><div class="inp" style="left:286px;top:3397px;width:75px;height:17px;font-size:7px">ИНН</div>
<div class="lb" style="left:194px;top:3425px;font-size:8px">Регион</div><div class="inp" style="left:194px;top:3436px;width:77px;height:17px;font-size:7px">Регион</div>
<div class="lb" style="left:285px;top:3425px;font-size:8px">Адрес</div><div class="inp" style="left:286px;top:3436px;width:75px;height:17px;font-size:7px">Адрес</div>
<div class="lb" style="left:194px;top:3464px;font-size:8px">Телефон</div><div class="inp" style="left:194px;top:3475px;width:77px;height:17px;font-size:7px">Телефон</div>
<div class="lb" style="left:285px;top:3464px;font-size:8px">E-mail</div><div class="inp" style="left:286px;top:3475px;width:75px;height:17px;font-size:7px">E-mail</div>
<div class="lb" style="left:194px;top:3503px;font-size:8px">Описание</div><div class="inp" style="left:194px;top:3514px;width:167px;height:18px;font-size:7px">Описание</div>
<div class="lb" style="left:194px;top:3542px;font-size:8px">Дата</div><div class="inp" style="left:194px;top:3553px;width:77px;height:18px"></div>
<div class="lb" style="left:285px;top:3542px;font-size:8px">Время</div><div class="inp" style="left:286px;top:3553px;width:75px;height:18px"></div>
<div class="lb" style="left:194px;top:3581px;font-size:8px">Менеджер</div><div class="inp" style="left:194px;top:3592px;width:167px;height:18px;justify-content:flex-end;padding-right:4px">⇕</div>
<div class="btn gr" style="left:194px;top:3617px;width:77px;height:19px;line-height:17px;font-size:7px">Найти</div>
<div class="btn ol" style="left:286px;top:3617px;width:75px;height:19px;line-height:17px;font-size:7px">Очистить</div>
<div class="a sm" style="left:206px;top:3674px;font-size:5px">⇕ &nbsp;&nbsp;&nbsp;&nbsp; На контроле: с 03.04.2019 по 10.04.2019</div>
<div class="a" style="left:194px;top:3690px;width:168px;height:93px;background:#fddde4;font-size:5px;color:#999">
<div style="background:#f7cfd8;height:15px;padding:5px 7px;font-weight:bold;color:#555">Название &nbsp;&nbsp;&nbsp;&nbsp;&nbsp;&nbsp;&nbsp;&nbsp;&nbsp; Регион &nbsp;&nbsp;&nbsp;&nbsp;&nbsp;&nbsp;&nbsp;&nbsp;&nbsp;&nbsp;&nbsp;&nbsp;&nbsp;&nbsp;&nbsp;&nbsp;&nbsp;&nbsp;&nbsp;&nbsp;&nbsp; Телефон</div>
<div class="a" style="left:11px;top:25px;font-weight:bold;color:#555">Компания Иванова1</div><div class="a" style="left:90px;top:25px">Краснодарский край<br>(Кубань)</div><div class="a" style="left:11px;top:44px">8-918-245-67-89</div>
<div class="a" style="left:11px;top:65px;width:18px;height:14px;background:#343a40"></div><div class="a" style="left:128px;top:65px;width:28px;height:14px;background:#dc3545"></div>
</div>
<!-- p3 -->
<div class="a sm" style="left:440px;top:3349px;font-size:5px">Все организации</div>
<div class="a" style="left:379px;top:3362px;width:167px;height:421px;background:#eee;font-size:5px;color:#999">
<div style="background:#fff;height:18px;padding:6px 10px;font-weight:bold;color:#555">Название &nbsp;&nbsp;&nbsp;&nbsp;&nbsp;&nbsp;&nbsp;&nbsp;&nbsp;&nbsp; Регион &nbsp;&nbsp;&nbsp;&nbsp;&nbsp;&nbsp;&nbsp;&nbsp;&nbsp;&nbsp;&nbsp;&nbsp;&nbsp;&nbsp;&nbsp; Телефон</div>
<div class="row" style="top:20px;height:73px"><b class="a" style="left:10px;top:10px;color:#555">Газпром</b><span class="a" style="left:80px;top:10px">Москва</span><span class="a" style="left:10px;top:20px">8-800-123-45-67</span><span class="a" style="left:10px;top:48px;width:10px;height:13px;border:1px solid #aaa"></span><span class="a" style="left:125px;top:48px;width:28px;height:13px;border:1px solid #aaa"></span></div>
<div class="row" style="top:95px;height:90px"><b class="a" style="left:10px;top:10px;color:#555">Компания Иванова1</b><span class="a" style="left:90px;top:10px">Краснодарский край<br>(Кубань)</span><span class="a" style="left:10px;top:30px">8-918-245-67-89</span><span class="a" style="left:10px;top:60px;width:18px;height:13px;border:1px solid #aaa"></span><span class="a" style="left:125px;top:60px;width:28px;height:13px;border:1px solid #aaa"></span></div>
<div class="row" style="top:187px;height:100px"><b class="a" style="left:10px;top:10px;color:#555">Компания Иванова2</b><span class="a" style="left:90px;top:10px">Адыгея (Республика<br>Адыгея)</span><span class="a" style="left:10px;top:30px">8-918-233-33-33</span><span class="a" style="left:10px;top:48px">03.04.2019 чксчксчк</span><span class="a" style="left:10px;top:70px;width:18px;height:13px;border:1px solid #aaa"></span><span class="a" style="left:125px;top:70px;width:28px;height:13px;border:1px solid #aaa"></span></div>
<div class="row" style="top:289px;height:110px"><b class="a" style="left:10px;top:10px;color:#555">Компания Петрова</b><span class="a" style="left:10px;top:28px;width:145px;line-height:8px">02.04.2019 Дорогу над ведущими буквенных парадигматическая там подпоясал вскоре от всех, если деревни что маленьких, снова то путь строчка. Агенство на берегу, безопасную?</span><span class="a" style="left:10px;top:80px;width:18px;height:13px;border:1px solid #aaa"></span><span class="a" style="left:125px;top:80px;width:28px;height:13px;border:1px solid #aaa"></span></div>
<div class="row" style="top:401px;height:20px"><b class="a" style="left:10px;top:8px;color:#555">Компания Сидорова</b></div>
</div>
<!-- p4 -->
<div class="mp" style="left:560px;top:3337px;width:173px;height:35px"></div>
<div class="btn" style="left:566px;top:3344px;width:17px;height:19px;line-height:17px;font-size:6px">⌂</div>
<div class="btn" style="left:587px;top:3344px;width:17px;height:19px;line-height:17px;font-size:6px">⊕</div>
<div class="a" style="left:706px;top:3342px;width:12px;height:24px;background:#f2c29b;border-radius:6px 6px 2px 2px"></div>
<div class="btn gr" style="left:608px;top:3376px;width:43px;height:16px;line-height:14px;font-size:5.5px">Сохранить</div>
<div class="btn ol" style="left:655px;top:3376px;width:35px;height:16px;line-height:14px;font-size:5.5px">Закрыть</div>
<div class="a sm" style="left:588px;top:3401px;font-size:4.5px;font-weight:bold">Дата</div><div class="a sm" style="left:634px;top:3401px;font-size:4.5px;font-weight:bold">Время</div><div class="a sm" style="left:683px;top:3401px;font-size:4.5px;font-weight:bold">Менеджер</div>
<div class="btn rd" style="left:569px;top:3412px;width:51px;height:18px;line-height:16px;font-size:7px">08.04.2019</div>
<div class="btn dk" style="left:628px;top:3412px;width:34px;height:18px;line-height:16px;font-size:7px">09:00</div>
<div class="inp" style="left:672px;top:3411px;width:54px;height:20px;font-size:7px">Сидоров ( ⇕</div>
<div class="mp" style="left:567px;top:3444px;width:166px;height:339px"></div>
<div class="lbb" style="left:580px;top:3463px;font-size:5px">Название</div><div class="inp" style="left:580px;top:3474px;width:138px;height:18px;font-size:7px">Сургутнефтег</div>
<div class="lbb" style="left:580px;top:3505px;font-size:5px">ИНН</div><div class="inp" style="left:580px;top:3516px;width:138px;height:19px;font-size:7px">ИНН</div>
<div class="lbb" style="left:580px;top:3548px;font-size:5px">Регион</div><div class="inp" style="left:580px;top:3559px;width:138px;height:19px;font-size:7px">Тюменская область</div>
<div class="lbb" style="left:580px;top:3590px;font-size:5px">Адрес</div><div class="inp" style="left:580px;top:3601px;width:138px;height:19px;font-size:7px">Адрес</div>
<div class="lbb" style="left:580px;top:3633px;font-size:5px">Телефон</div><div class="inp" style="left:580px;top:3643px;width:138px;height:19px;font-size:7px">8 (888) 999-12-13</div>
<div class="lbb" style="left:580px;top:3675px;font-size:5px">E-mail</div><div class="inp" style="left:580px;top:3686px;width:138px;height:19px;font-size:7px">E-mail</div>
<div class="lbb" style="left:580px;top:3714px;font-size:5px">Описание</div><div class="inp" style="left:580px;top:3726px;width:138px;height:57px;font-size:7px;align-items:flex-start;padding-top:6px">Газ есть, нефти нет</div>
<div class="a" style="left:722px;top:3448px;width:10px;height:12px;background:#e8ecf2;font-size:5px;text-align:center;line-height:12px;color:#333">▲</div>
<!-- p5 -->
<div class="mp" style="left:745px;top:3337px;width:176px;height:36px"></div>
<div class="btn" style="left:751px;top:3345px;width:17px;height:19px;line-height:17px;font-size:6px">⌂</div>
<div class="btn" style="left:772px;top:3345px;width:17px;height:19px;line-height:17px;font-size:6px">⊕</div>
<div class="a" style="left:890px;top:3343px;width:12px;height:24px;background:#f2c29b;border-radius:6px 6px 2px 2px"></div>
<div class="btn gr" style="left:792px;top:3377px;width:43px;height:16px;line-height:14px;font-size:5.5px">Сохранить</div>
<div class="btn ol" style="left:840px;top:3377px;width:35px;height:16px;line-height:14px;font-size:5.5px">Закрыть</div>
<div class="a sm" style="left:772px;top:3403px;font-size:4.5px;font-weight:bold">Дата</div><div class="a sm" style="left:818px;top:3403px;font-size:4.5px;font-weight:bold">Время</div><div class="a sm" style="left:868px;top:3403px;font-size:4.5px;font-weight:bold">Менеджер</div>
<div class="btn rd" style="left:753px;top:3413px;width:51px;height:18px;line-height:16px;font-size:7px">08.04.2019</div>
<div class="btn dk" style="left:812px;top:3413px;width:34px;height:18px;line-height:16px;font-size:7px">09:00</div>
<div class="inp" style="left:856px;top:3412px;width:54px;height:20px;font-size:7px">Сидоров ( ⇕</div>
<div class="mp" style="left:751px;top:3445px;width:166px;height:29px"></div>
<div class="a" style="left:906px;top:3450px;width:10px;height:12px;background:#e8ecf2;font-size:5px;text-align:center;line-height:12px;color:#333">▼</div>
<div class="lbb" style="left:764px;top:3508px;font-size:5px">ПЕРЕГОВОРЫ:</div>
<div class="btn yl" style="left:867px;top:3504px;width:36px;height:15px;line-height:13px;font-size:5px">Добавить</div>
<div class="a" style="left:764px;top:3533px;width:40px;height:14px;background:#555;color:#fff;font-size:5.5px;text-align:center;line-height:14px">01.04.2019</div>
<div class="a sm" style="left:764px;top:3553px;font-size:5px">Обещали налить чуть нефти и дать по газам</div>
<div class="lbb" style="left:764px;top:3616px;font-size:5px">КОНТАКТЫ:</div>
<div class="btn yl" style="left:867px;top:3612px;width:36px;height:15px;line-height:13px;font-size:5px">Добавить</div>
<div class="a sm" style="left:764px;top:3644px;font-size:5px"><b style="color:#444">Сургут Нефтегазович</b> - Директор</div>
<div class="a sm" style="left:764px;top:3654px;font-size:5px">8-800-000-00-00</div>
<div class="a" style="left:764px;top:3700px;width:68px;height:16px;background:#e4e7ee;font-size:5px;color:#aaa;text-align:center;line-height:16px">Удалить компанию</div>

<!-- FOOTER -->
<div class="a" style="left:0;top:3812px;width:935px;text-align:center;font-weight:bold;font-size:25px;color:#333;letter-spacing:-0.8px">Демо: <span style="color:#1a8cff">base.autoprkt.ru</span></div>
<div class="a" style="left:0;top:3845px;width:935px;text-align:center;font-weight:bold;font-size:25px;color:#333;letter-spacing:-0.8px">Портфолио https://peretc01.github.io</div>

<!-- WATERMARKS -->
<div class="wm" style="left:-183px;top:953px;width:1300px;transform:rotate(-27.75deg)">Портфолио peretc001.github.io</div>
<div class="wm" style="left:-183px;top:2158px;width:1300px;transform:rotate(-27.5deg)">Портфолио peretc001.github.io</div>
<div class="wm" style="left:-183px;top:3125px;width:1300px;transform:rotate(-26.8deg)"><span style="position:relative;left:60px">Портфолио peretc001.github.io</span></div>
</body></html>
